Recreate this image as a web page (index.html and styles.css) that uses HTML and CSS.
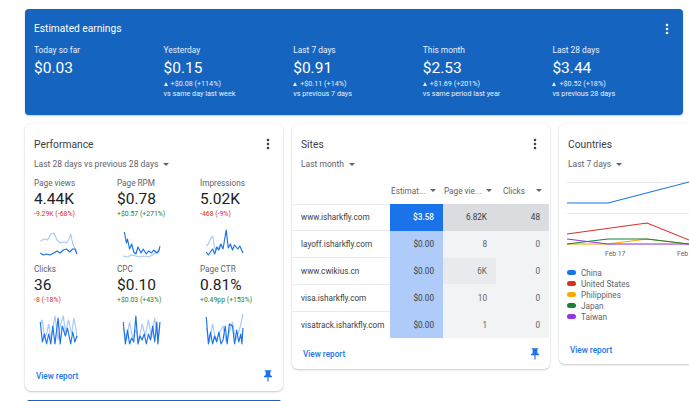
FILE: index.html
```html
<!DOCTYPE html>
<html lang="en">
<head>
<meta charset="utf-8">
<title>AdSense overview</title>
<link rel="stylesheet" href="styles.css">
</head>
<body>
<div class="page">
  <section class="banner">
    <div class="banner-head">
      <h2 class="banner-title">Estimated earnings</h2>
      <svg class="more" viewBox="0 0 4 12"><circle cx="2" cy="2" r="1.3"/><circle cx="2" cy="6" r="1.3"/><circle cx="2" cy="10" r="1.3"/></svg>
    </div>
    <div class="earn-row">
      <div class="earn"><div class="earn-label">Today so far</div><div class="earn-value">$0.03</div></div>
      <div class="earn"><div class="earn-label">Yesterday</div><div class="earn-value">$0.15</div><div class="earn-delta"><span class="tri"></span>+$0.08 (+114%)</div><div class="earn-delta">vs same day last week</div></div>
      <div class="earn"><div class="earn-label">Last 7 days</div><div class="earn-value">$0.91</div><div class="earn-delta"><span class="tri"></span>+$0.11 (+14%)</div><div class="earn-delta">vs previous 7 days</div></div>
      <div class="earn"><div class="earn-label">This month</div><div class="earn-value">$2.53</div><div class="earn-delta"><span class="tri"></span>+$1.69 (+201%)</div><div class="earn-delta">vs same period last year</div></div>
      <div class="earn"><div class="earn-label">Last 28 days</div><div class="earn-value">$3.44</div><div class="earn-delta"><span class="tri"></span>+$0.52 (+18%)</div><div class="earn-delta">vs previous 28 days</div></div>
    </div>
  </section>

  <div class="cards">
    <section class="card card-perf">
      <div class="card-head">
        <h3 class="card-title">Performance</h3>
        <svg class="more dark" viewBox="0 0 4 12"><circle cx="2" cy="2" r="1.3"/><circle cx="2" cy="6" r="1.3"/><circle cx="2" cy="10" r="1.3"/></svg>
      </div>
      <div class="range">Last 28 days vs previous 28 days<span class="caret"></span></div>
      <div class="metrics">
        <div class="metric">
          <div class="m-label">Page views</div><div class="m-value">4.44K</div><div class="m-delta down">-9.29K (-68%)</div>
          <svg class="spark" viewBox="0 -2 42 36" preserveAspectRatio="none"><polyline class="prev" points="6,11 10,9 13,10 16,4 19,3 22,10 25,13 28,12 31,13 34,8 35,4 37,14 41,22"/><polyline class="cur" points="6,23 9,25 12,24 15,25 19,23 22,21 25,23 28,20 31,19 34,22 37,19 39,19 41,24"/></svg>
        </div>
        <div class="metric">
          <div class="m-label">Page RPM</div><div class="m-value">$0.78</div><div class="m-delta up">+$0.57 (+271%)</div>
          <svg class="spark" viewBox="0 -2 42 36" preserveAspectRatio="none"><polyline class="prev" points="6,26 10,27 14,25 18,26 22,27 26,26 30,27 34,25 38,22 41,18"/><polyline class="cur" points="7,2 9,13 10,9 12,19 14,14 16,22 18,24 20,17 23,23 25,19 28,24 30,21 33,23 35,20 38,23 40,21 41,16"/></svg>
        </div>
        <div class="metric">
          <div class="m-label">Impressions</div><div class="m-value">5.02K</div><div class="m-delta down">-468 (-9%)</div>
          <svg class="spark" viewBox="0 -2 42 36" preserveAspectRatio="none"><polyline class="prev" points="6,16 8,14 10,9 12,6 14,18 16,20 19,15"/><polyline class="cur" points="6,22 8,25 10,22 12,19 14,24 16,17 18,20 20,14 22,19 25,0 27,18 29,14 31,20 33,15 36,19 38,16 41,23"/></svg>
        </div>
        <div class="metric">
          <div class="m-label">Clicks</div><div class="m-value">36</div><div class="m-delta down">-8 (-18%)</div>
          <svg class="spark" viewBox="0 0 42 36" preserveAspectRatio="none"><polyline class="prev" points="6,10 8,6 10,24 12,20 14,10 16,26 18,14 20,2 23,26 25,12 28,2 30,18 33,6 36,20 38,4 40,14 41,24"/><polyline class="cur" points="6,8 8,28 10,20 12,30 14,20 16,30 18,12 20,30 23,4 25,30 27,12 30,22 32,14 35,30 37,18 39,28 41,22"/></svg>
        </div>
        <div class="metric">
          <div class="m-label">CPC</div><div class="m-value">$0.10</div><div class="m-delta up">+$0.03 (+43%)</div>
          <svg class="spark" viewBox="0 0 42 36" preserveAspectRatio="none"><polyline class="prev" points="6,14 9,26 12,8 15,24 18,16 21,26 24,10 27,22 30,6 33,24 36,4 39,26 41,12"/><polyline class="cur" points="6,8 8,30 10,16 12,30 14,24 16,28 18,2 20,30 22,22 24,26 26,20 28,30 30,20 32,26 34,12 36,28 38,8 39,30 41,8"/></svg>
        </div>
        <div class="metric">
          <div class="m-label">Page CTR</div><div class="m-value">0.81%</div><div class="m-delta up">+0.49pp (+153%)</div>
          <svg class="spark" viewBox="0 0 42 36" preserveAspectRatio="none"><polyline class="prev" points="6,14 9,28 12,10 15,26 18,20 22,12 25,28 28,18 31,8 34,26 37,18 39,10 41,0"/><polyline class="cur" points="6,3 8,30 10,18 12,30 14,22 16,28 18,18 20,30 22,26 24,12 26,30 28,10 31,12 33,30 35,16 37,28 39,20 40,30 41,14"/></svg>
        </div>
      </div>
      <div class="card-foot foot-perf">
        <a class="view">View report</a>
        <svg class="pin" viewBox="5 2 14 20"><path d="M16 9V4h1c.55 0 1-.45 1-1s-.45-1-1-1H7c-.55 0-1 .45-1 1s.45 1 1 1h1v5c0 1.66-1.34 3-3 3v2h5.97v7l1 1 1-1v-7H19v-2c-1.66 0-3-1.34-3-3z"/></svg>
      </div>
    </section>

    <section class="card card-sites">
      <div class="card-head">
        <h3 class="card-title">Sites</h3>
        <svg class="more dark" viewBox="0 0 4 12"><circle cx="2" cy="2" r="1.3"/><circle cx="2" cy="6" r="1.3"/><circle cx="2" cy="10" r="1.3"/></svg>
      </div>
      <div class="range">Last month<span class="caret"></span></div>
      <table class="sites">
        <thead>
          <tr><th class="site"></th><th><div class="th-in">Estimat...<span class="caret"></span></div></th><th><div class="th-in">Page vie...<span class="caret"></span></div></th><th><div class="th-in th-clicks">Clicks<span class="caret"></span></div></th></tr>
        </thead>
        <tbody>
          <tr><td class="site">www.isharkfly.com</td><td class="est-hi">$3.58</td><td class="hi">6.82K</td><td class="hi">48</td></tr>
          <tr><td class="site">layoff.isharkfly.com</td><td class="est">$0.00</td><td class="lo">8</td><td class="lo">0</td></tr>
          <tr><td class="site">www.cwikius.cn</td><td class="est">$0.00</td><td class="mid">6K</td><td class="lo">0</td></tr>
          <tr><td class="site">visa.isharkfly.com</td><td class="est">$0.00</td><td class="lo">10</td><td class="lo">0</td></tr>
          <tr><td class="site">visatrack.isharkfly.com</td><td class="est">$0.00</td><td class="lo">1</td><td class="lo">0</td></tr>
        </tbody>
      </table>
      <div class="card-foot foot-sites">
        <a class="view">View report</a>
        <svg class="pin" viewBox="5 2 14 20"><path d="M16 9V4h1c.55 0 1-.45 1-1s-.45-1-1-1H7c-.55 0-1 .45-1 1s.45 1 1 1h1v5c0 1.66-1.34 3-3 3v2h5.97v7l1 1 1-1v-7H19v-2c-1.66 0-3-1.34-3-3z"/></svg>
      </div>
    </section>

    <section class="card card-countries">
      <div class="card-head">
        <h3 class="card-title">Countries</h3>
      </div>
      <div class="range">Last 7 days<span class="caret"></span></div>
      <svg class="chart" viewBox="0 0 250 78" width="250" height="78">
        <line class="grid" x1="0" y1="0.5" x2="250" y2="0.5"/>
        <line class="grid" x1="0" y1="31.5" x2="250" y2="31.5"/>
        <line class="grid" x1="0" y1="62.5" x2="250" y2="62.5"/>
        <polyline class="l-blue" points="0,21 41,21 122,0 250,0"/>
        <polyline class="l-red" points="0,52 80,41 122,58 250,58"/>
        <polyline class="l-orange" points="0,62 41,62 80,57 122,62"/>
        <polyline class="l-green" points="0,62 41,57 80,57 122,62"/>
        <polyline class="l-purple" points="0,57 41,62 250,62"/>
        <text class="tick" x="38" y="74">Feb 17</text>
        <text class="tick" x="110" y="74">Feb 19</text>
      </svg>
      <ul class="legend">
        <li><span class="pill p-blue"></span>China</li>
        <li><span class="pill p-red"></span>United States</li>
        <li><span class="pill p-orange"></span>Philippines</li>
        <li><span class="pill p-green"></span>Japan</li>
        <li><span class="pill p-purple"></span>Taiwan</li>
      </ul>
      <div class="card-foot foot-countries">
        <a class="view">View report</a>
      </div>
    </section>
  </div>
  <div class="next-strip"></div>
</div>
</body>
</html>
```

FILE: styles.css
```css
* { box-sizing: border-box; }
html, body { margin: 0; padding: 0; background: #fff; }
body { width: 689px; height: 401px; overflow: hidden; font-family: Roboto, "Liberation Sans", sans-serif; color: #3c4043; }
.page { padding: 9px 0 0 25px; width: 900px; }

.banner { width: 658px; height: 106px; background: #1565c0; border-radius: 4px; color: #fff; padding: 14px 9px 0; box-shadow: 0 1px 2px rgba(60,64,67,.3); }
.banner-head { display: flex; justify-content: space-between; align-items: center; height: 12px; }
.banner-title { margin: 0; font-size: 10.2px; font-weight: 400; line-height: 12px; }
.more { width: 4px; height: 12px; fill: #fff; margin-right: 5px; flex: none; }
.more.dark { fill: #3c4043; margin-right: 4px; }
.earn-row { display: grid; grid-template-columns: repeat(5, 129.6px); margin-top: 10px; }
.earn-label { font-size: 8.4px; line-height: 10px; font-weight: 400; color: #e8f0fe; }
.earn-value { font-size: 15.5px; line-height: 18px; margin-top: 4px; }
.earn-delta { font-size: 7.2px; line-height: 9.5px; font-weight: 400; color: #e8f0fe; }
.earn-value + .earn-delta { margin-top: 2px; }
.tri { display: inline-block; width: 0; height: 0; border-left: 2.5px solid transparent; border-right: 2.5px solid transparent; border-bottom: 4px solid #e8f0fe; margin: 0 3px 0 0; }

.cards { display: flex; gap: 9px; align-items: flex-start; margin-top: 9px; }
.card { width: 258px; background: #fff; border-radius: 6px; box-shadow: 0 1px 2px rgba(60,64,67,.25), 0 0 2px rgba(60,64,67,.1); flex: none; }
.card-perf { height: 267px; }
.card-sites { height: 245px; }
.card-countries { height: 240px; }
.card-head { display: flex; justify-content: space-between; align-items: center; height: 12px; padding: 0 9px; margin-top: 0; transform: translateY(14px); }
.card-title { margin: 0; font-size: 10.3px; font-weight: 400; color: #3c4043; }
.range { display: flex; align-items: center; font-size: 8.5px; line-height: 10px; font-weight: 400; color: #5f6368; padding: 0 9px; margin-top: 23px; }
.caret { display: inline-block; width: 0; height: 0; border-left: 3px solid transparent; border-right: 3px solid transparent; border-top: 3px solid #5f6368; margin-left: 5px; flex: none; }

.metrics { display: grid; grid-template-columns: repeat(3, 83px); padding: 0 9px; margin-top: 9px; }
.metric { height: 86px; }
.m-label { font-size: 8.2px; line-height: 10px; color: #5f6368; }
.m-value { font-size: 15.5px; line-height: 18px; margin-top: 2px; color: #202124; }
.m-delta { font-size: 6.9px; line-height: 9px; margin-top: 2px; font-weight: 400; }
.down { color: #d93025; }
.up { color: #188038; }
.spark { display: block; width: 44px; height: 36px; margin-top: 9px; }
.spark polyline { fill: none; stroke-width: 1.1; stroke-linejoin: round; }
.spark .prev { stroke: #a8c7fa; }
.spark .cur { stroke: #1a73e8; }

.card-foot { display: flex; justify-content: space-between; align-items: center; padding: 0 11px; }
.foot-perf { margin-top: 20px; }
.view { font-size: 8.2px; line-height: 12px; font-weight: 500; color: #1a73e8; }
.pin { width: 8px; height: 12px; fill: #1a73e8; }

.sites { border-collapse: collapse; width: 257px; table-layout: fixed; margin-top: 12px; font-size: 8.2px; }
.sites th { font-weight: 400; color: #5f6368; height: 23px; padding: 0 0 4px; text-align: left; width: 53px; white-space: nowrap; }
.sites th.site { width: 98px; }
.th-in { display: flex; justify-content: space-between; align-items: center; padding: 0 7px 0 1px; }
.th-clicks { padding-left: 7px; }
.sites td { height: 26.8px; padding: 0 9px 0 0; text-align: right; color: #5f6368; border: 0; }
.sites td.site { text-align: left; padding: 0 0 0 9px; color: #3c4043; border-top: 1px solid #e8eaed; white-space: nowrap; }
.est-hi { background: #1a73e8; color: #fff !important; font-weight: 500; }
.est { background: #aecbfa; color: #3c4043 !important; }
.hi { background: #dadce0; color: #3c4043 !important; }
.mid { background: #e8eaed; }
.lo { background: #f1f3f4; }
.foot-sites { margin-top: 10px; }

.chart { display: block; margin: 13px 0 0 8px; overflow: visible; }
.grid { stroke: #e8eaed; stroke-width: 1; }
.chart polyline { fill: none; stroke-width: 1.1; }
.l-blue { stroke: #1a73e8; }
.l-red { stroke: #d93025; }
.l-orange { stroke: #f9ab00; }
.l-green { stroke: #188038; }
.l-purple { stroke: #9334e6; }
.tick { font-size: 6.8px; fill: #5f6368; font-family: Roboto, sans-serif; }
.legend { list-style: none; margin: 7px 0 0; padding: 0 0 0 8px; }
.legend li { display: flex; align-items: center; height: 11px; font-size: 8.2px; color: #5f6368; }
.pill { width: 9px; height: 5px; border-radius: 2.5px; margin-right: 5px; flex: none; }
.p-blue { background: #1a73e8; }
.p-red { background: #d93025; }
.p-orange { background: #f9ab00; }
.p-green { background: #188038; }
.p-purple { background: #9334e6; }
.foot-countries { margin-top: 22px; }

.next-strip { width: 254px; height: 4px; background: #1565c0; margin: 9px 0 0 2px; border-radius: 2px 2px 0 0; }
```
